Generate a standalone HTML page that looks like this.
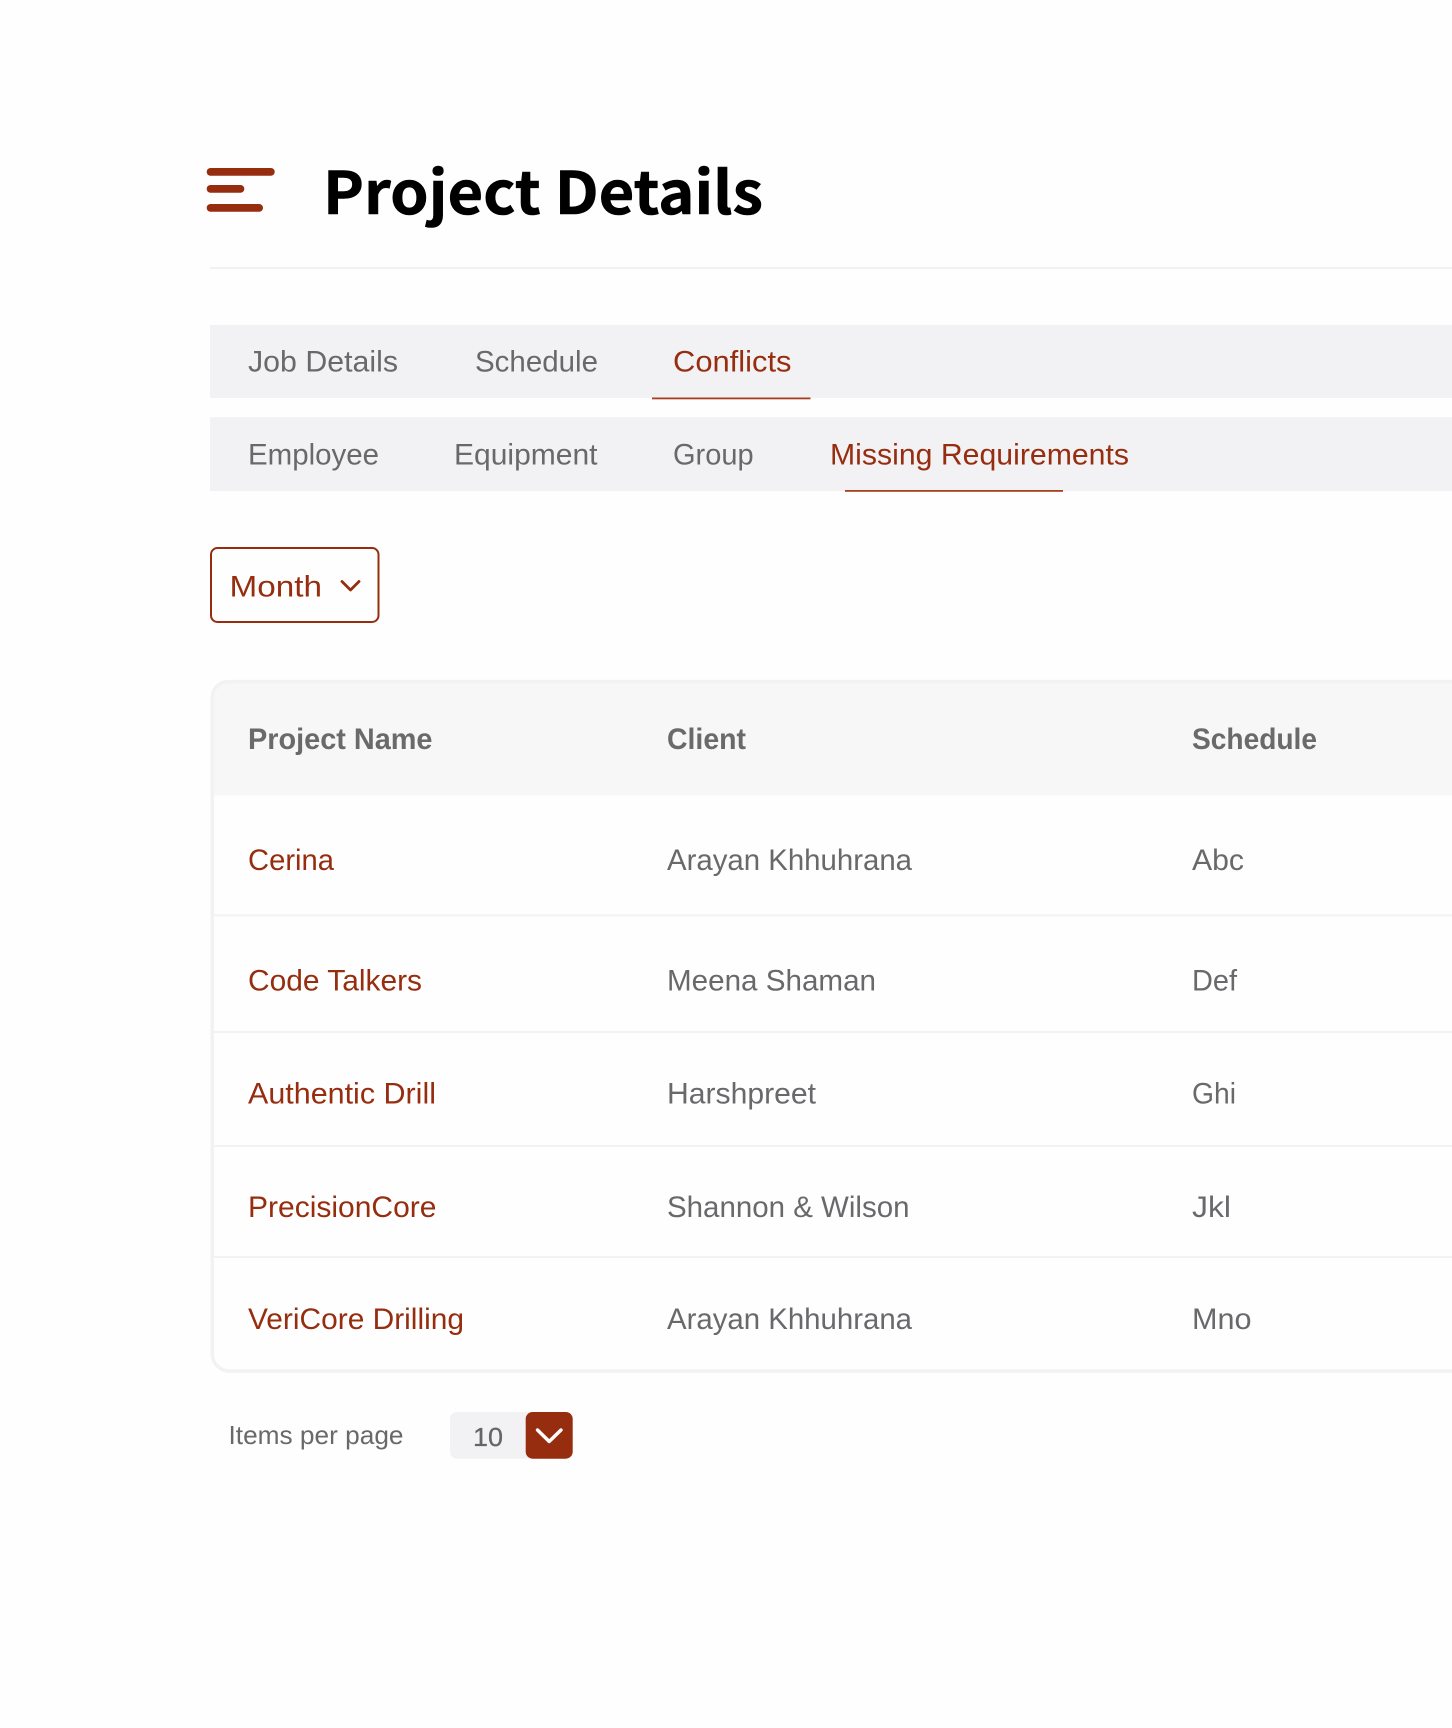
<!DOCTYPE html>
<html lang="en">
<head>
<meta charset="utf-8">
<title>Project Details</title>
<style>
html,body{margin:0;padding:0;background:#fefefe;}
body{width:1452px;height:1728px;overflow:hidden;}
svg{display:block;}
text{font-family:"Liberation Sans",sans-serif;font-size:30px;}
.g{fill:#69696c;}
.r{fill:#962d0f;}
.h{fill:#6a6a6a;font-weight:700;font-size:29.5px;}
</style>
</head>
<body>
<svg width="1452" height="1728" viewBox="0 0 1452 1728" xmlns="http://www.w3.org/2000/svg">
<rect width="1452" height="1728" fill="#fefefe"/>

<!-- hamburger -->
<rect x="206.7" y="168" width="68" height="7.7" rx="3.85" fill="#962d0f"/>
<rect x="206.7" y="185" width="37.6" height="7.7" rx="3.85" fill="#962d0f"/>
<rect x="206.7" y="204" width="56.3" height="7.7" rx="3.85" fill="#962d0f"/>

<!-- title -->
<text x="323" y="214" textLength="440" lengthAdjust="spacingAndGlyphs" stroke="#000" stroke-width="0.6" style="font-family:'Noto Sans CJK JP','Liberation Sans',sans-serif;font-weight:700;font-size:59px" fill="#000">Project Details</text>
<rect x="210" y="267" width="1242" height="2" fill="#f1f1f1"/>

<!-- tabs 1 -->
<rect x="210" y="325" width="1242" height="73" fill="#f2f1f3"/>
<text class="g" x="248" y="371.7" textLength="150" lengthAdjust="spacingAndGlyphs">Job Details</text>
<text class="g" x="475" y="371.7" textLength="123" lengthAdjust="spacingAndGlyphs">Schedule</text>
<text class="r" x="673" y="371.7" textLength="118.5" lengthAdjust="spacingAndGlyphs">Conflicts</text>
<rect x="652" y="397.5" width="158.5" height="1.8" fill="#a8401f"/>

<!-- tabs 2 -->
<rect x="210" y="417.3" width="1242" height="73.7" fill="#f2f1f3"/>
<text class="g" x="248" y="464.3" textLength="131" lengthAdjust="spacingAndGlyphs">Employee</text>
<text class="g" x="454" y="464.3" textLength="143.5" lengthAdjust="spacingAndGlyphs">Equipment</text>
<text class="g" x="673" y="464.3" textLength="80.6" lengthAdjust="spacingAndGlyphs">Group</text>
<text class="r" x="830" y="464.3" textLength="299" lengthAdjust="spacingAndGlyphs">Missing Requirements</text>
<rect x="845" y="490" width="218" height="1.8" fill="#a8401f"/>

<!-- month -->
<rect x="211" y="548" width="167.5" height="74" rx="6.5" fill="#fefefe" stroke="#962d0f" stroke-width="2"/>
<text x="229.5" y="596.5" textLength="92.5" lengthAdjust="spacingAndGlyphs" class="r" style="font-size:30px">Month</text>
<path d="M342 581.5L350.5 590L359 581.5" fill="none" stroke="#962d0f" stroke-width="2.8" stroke-linecap="round" stroke-linejoin="round"/>

<!-- table -->
<path d="M228 681.5H1452V795.5H212.5V697A15.5 15.5 0 0 1 228 681.5Z" fill="#f7f7f7"/>
<path d="M1452 681.7H228A15.7 15.7 0 0 0 212.3 697.4V1354A17 17 0 0 0 229.3 1371H1452" fill="none" stroke="#f2f2f2" stroke-width="3.6"/>
<rect x="214" y="914.3" width="1238" height="2" fill="#f2f2f2"/>
<rect x="214" y="1031" width="1238" height="2" fill="#f2f2f2"/>
<rect x="214" y="1145" width="1238" height="2" fill="#f2f2f2"/>
<rect x="214" y="1256" width="1238" height="2" fill="#f2f2f2"/>

<text class="h" x="248" y="749" textLength="184.5" lengthAdjust="spacingAndGlyphs">Project Name</text>
<text class="h" x="667" y="749" textLength="79" lengthAdjust="spacingAndGlyphs">Client</text>
<text class="h" x="1192" y="749" textLength="125" lengthAdjust="spacingAndGlyphs">Schedule</text>

<text class="r" x="248" y="870" textLength="86" lengthAdjust="spacingAndGlyphs">Cerina</text>
<text class="g" x="667" y="870" textLength="245" lengthAdjust="spacingAndGlyphs">Arayan Khhuhrana</text>
<text class="g" x="1192" y="870" textLength="52" lengthAdjust="spacingAndGlyphs">Abc</text>

<text class="r" x="248" y="990.7" textLength="174" lengthAdjust="spacingAndGlyphs">Code Talkers</text>
<text class="g" x="667" y="990.7" textLength="209" lengthAdjust="spacingAndGlyphs">Meena Shaman</text>
<text class="g" x="1192" y="990.7" textLength="45" lengthAdjust="spacingAndGlyphs">Def</text>

<text class="r" x="248" y="1103.7" textLength="188" lengthAdjust="spacingAndGlyphs">Authentic Drill</text>
<text class="g" x="667" y="1103.7" textLength="149" lengthAdjust="spacingAndGlyphs">Harshpreet</text>
<text class="g" x="1192" y="1103.7" textLength="44" lengthAdjust="spacingAndGlyphs">Ghi</text>

<text class="r" x="248" y="1217" textLength="188.5" lengthAdjust="spacingAndGlyphs">PrecisionCore</text>
<text class="g" x="667" y="1217" textLength="242.5" lengthAdjust="spacingAndGlyphs">Shannon &amp; Wilson</text>
<text class="g" x="1192" y="1217" textLength="39" lengthAdjust="spacingAndGlyphs">Jkl</text>

<text class="r" x="248" y="1329" textLength="216" lengthAdjust="spacingAndGlyphs">VeriCore Drilling</text>
<text class="g" x="667" y="1329" textLength="245" lengthAdjust="spacingAndGlyphs">Arayan Khhuhrana</text>
<text class="g" x="1192" y="1329" textLength="59.5" lengthAdjust="spacingAndGlyphs">Mno</text>

<!-- pagination -->
<text class="g" x="228.5" y="1444" textLength="175" lengthAdjust="spacingAndGlyphs" style="font-size:26px">Items per page</text>
<rect x="450" y="1412" width="90" height="46.7" rx="7" fill="#f2f1f3"/>
<text x="473" y="1446" textLength="30" lengthAdjust="spacingAndGlyphs" fill="#666" stroke="#666" stroke-width="0.3" style="font-size:26px">10</text>
<rect x="525.7" y="1412" width="47" height="46.7" rx="7" fill="#962d0f"/>
<path d="M537.5 1430L549.2 1441.5L561 1430" fill="none" stroke="#fff" stroke-width="3.4" stroke-linecap="round" stroke-linejoin="round"/>
</svg>
</body>
</html>
